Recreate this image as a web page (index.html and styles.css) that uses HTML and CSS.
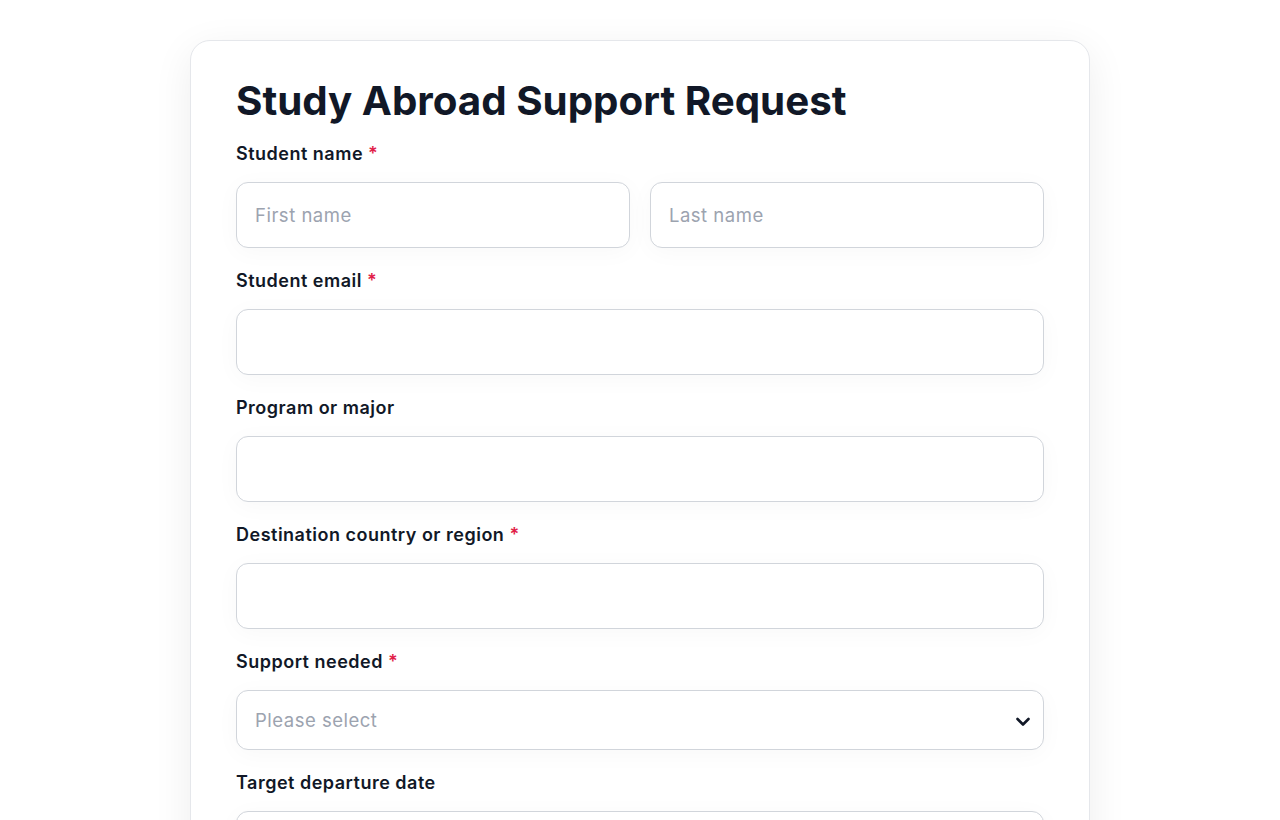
FILE: index.html
```html
<!DOCTYPE html>
<html lang="en">
<head>
    <meta charset="UTF-8">
    <meta name="viewport" content="width=device-width, initial-scale=1.0">
    <title>Study Abroad Support Request</title>
    <link rel="stylesheet" href="styles.css">
</head>
<body>
    <div class="form-card">
        <h1>Study Abroad Support Request</h1>

        <!-- Name -->
        <div class="field">
            <label>Student name <span class="req">*</span></label>
            <div class="name-row">
                <input type="text" placeholder="First name">
                <input type="text" placeholder="Last name">
            </div>
        </div>

        <div class="field">
            <label for="email">Student email <span class="req">*</span></label>
            <input type="email" id="email">
        </div>

        <div class="field">
            <label for="program">Program or major</label>
            <input type="text" id="program">
        </div>

        <div class="field">
            <label for="destination">Destination country or region <span class="req">*</span></label>
            <input type="text" id="destination">
        </div>

        <!-- Support select -->
        <div class="field">
            <label for="support">Support needed <span class="req">*</span></label>
            <div class="select-wrap">
                <select id="support">
                    <option value="">Please select</option>
                    <option value="visa">Visa guidance</option>
                    <option value="housing">Housing</option>
                    <option value="funding">Funding and scholarships</option>
                </select>
                <svg class="chevron" width="16" height="16" viewBox="0 0 16 16">
                    <path d="M2.5 5l5.5 5.5 5.5-5.5" fill="none" stroke="#111827" stroke-width="2.6" stroke-linecap="round" stroke-linejoin="round"/>
                </svg>
            </div>
        </div>

        <div class="field">
            <label for="departure">Target departure date</label>
            <input type="text" id="departure">
        </div>
    </div>
</body>
</html>
```

FILE: styles.css
```css
/* Page */
body {
    margin: 0;
    background-color: #ffffff;
    font-family: Inter, "Noto Sans", sans-serif;
    color: #111827;
}
.form-card {
    width: 900px;
    box-sizing: border-box;
    margin: 40px auto 0;
    padding: 36px 45px 40px;
    background-color: #ffffff;
    border: 1px solid #e5e7eb;
    border-radius: 20px;
    box-shadow: 0 10px 40px rgba(0, 0, 0, 0.07);
}
h1 {
    margin: 0 0 16px;
    font-size: 40.3px;
    font-weight: 700;
    line-height: 48px;
    color: #111827;
}
.field {
    margin-bottom: 20px;
}
label {
    display: block;
    margin-bottom: 15px;
    font-size: 18px;
    font-weight: 600;
    line-height: 26px;
    letter-spacing: 0.5px;
    color: #111827;
}
.req {
    color: #e11d48;
}
.name-row {
    display: flex;
    gap: 20px;
}
input[type="text"], input[type="email"], select {
    display: block;
    width: 100%;
    height: 66px;
    box-sizing: border-box;
    padding: 0 18px;
    border: 1px solid #d1d5db;
    border-radius: 12px;
    background-color: #ffffff;
    font-family: inherit;
    font-size: 18.5px;
    letter-spacing: 0.5px;
    color: #111827;
    box-shadow: 0 4px 24px rgba(17, 24, 39, 0.03);
    outline: none;
}
::placeholder {
    color: #9ca3af;
}
.select-wrap {
    position: relative;
}
select {
    height: 60px;
    appearance: none;
    color: #9ca3af;
}
.chevron {
    position: absolute;
    right: 13px;
    top: 24px;
    pointer-events: none;
}
```
